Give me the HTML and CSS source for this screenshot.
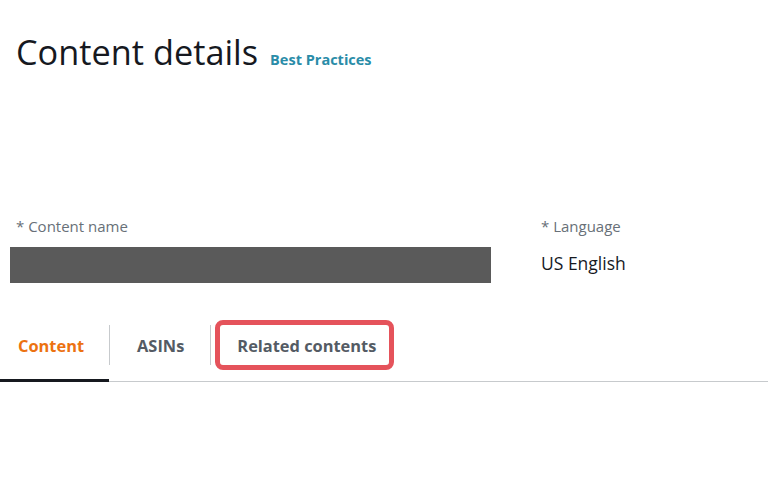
FILE: index.html
```html
<!DOCTYPE html>
<html lang="en">
<head>
<meta charset="utf-8">
<link rel="stylesheet" href="styles.css">
</head>
<body>
<div class="page">
  <header class="header">
    <h1 class="title">Content details</h1>
    <a class="help" href="#">Best Practices</a>
  </header>
  <section class="form">
    <div class="field field-name">
      <div class="label">* Content name</div>
      <div class="redacted"></div>
    </div>
    <div class="field field-lang">
      <div class="label">* Language</div>
      <div class="value">US English</div>
    </div>
  </section>
  <nav class="tabs">
    <div class="tab tab-active">Content</div>
    <div class="sep"></div>
    <div class="tab tab-asins">ASINs</div>
    <div class="sep"></div>
    <div class="tab tab-highlight">Related contents</div>
    <div class="rest"></div>
  </nav>
</div>
</body>
</html>
```
FILE: styles.css
```css
html, body {
  margin: 0;
  padding: 0;
  background: #ffffff;
}
.page {
  width: 768px;
  height: 480px;
  font-family: "Open Sans", "Liberation Sans", sans-serif;
  overflow: hidden;
}
.header {
  display: flex;
  align-items: baseline;
  gap: 12px;
  padding: 32px 0 0 16px;
}
.title {
  margin: 0;
  font-size: 34.3px;
  line-height: 40px;
  font-weight: 400;
  color: #16191f;
}
.help {
  font-size: 14.5px;
  font-weight: 700;
  color: #2a8ca8;
  text-decoration: none;
}
.form {
  display: flex;
  margin-top: 143px;
}
.field-name {
  width: 481px;
  margin-left: 10px;
}
.field-lang {
  margin-left: 50px;
}
.label {
  font-size: 15px;
  line-height: 22px;
  color: #687078;
  padding-left: 6px;
}
.field-lang .label {
  padding-left: 0;
}
.redacted {
  margin-top: 10px;
  height: 36px;
  background: #5a5a5a;
}
.value {
  margin-top: 14px;
  font-size: 17.5px;
  line-height: 24px;
  color: #16191f;
}
.tabs {
  display: flex;
  align-items: stretch;
  margin-top: 37px;
  height: 62px;
}
.tab {
  display: flex;
  align-items: center;
  font-size: 16.4px;
  font-weight: 700;
  color: #545b64;
  padding: 0 26px 11px 26px;
  border-bottom: 1px solid #c7cacd;
}
.tab-active {
  color: #ec7211;
  padding: 0 25px 9px 18px;
  border-bottom: 3px solid #16191f;
}
.tab-asins {
  padding-left: 27px;
}
.sep {
  width: 1px;
  background: linear-gradient(#ffffff 0, #ffffff 5px, #c7cacd 5px, #c7cacd 45px, #ffffff 45px);
  border-bottom: 1px solid #c7cacd;
}
.tab-highlight {
  position: relative;
  padding: 0 0 11px 26px;
  width: 157px;
}
.tab-highlight::before {
  content: "";
  position: absolute;
  left: 4px;
  top: 0;
  width: 169px;
  height: 40px;
  border: 5px solid #e5535b;
  border-radius: 8px;
}
.rest {
  flex: 1;
  border-bottom: 1px solid #c7cacd;
}
```
